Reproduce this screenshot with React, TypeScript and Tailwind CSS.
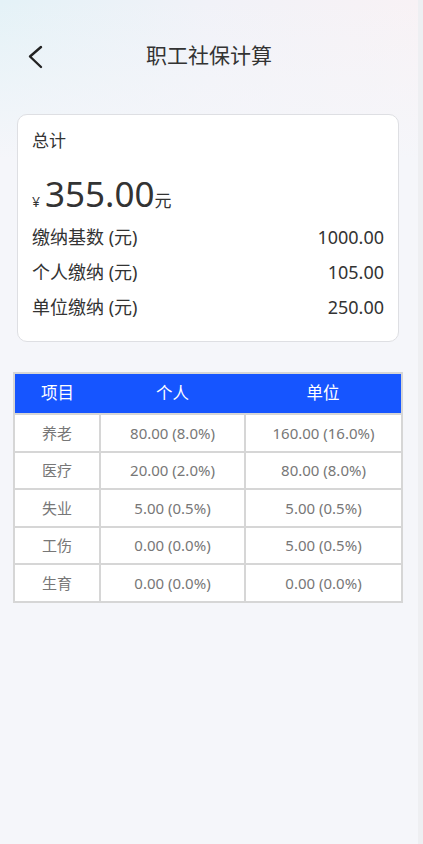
const summary = [
  { label: "缴纳基数 (元)", value: "1000.00" },
  { label: "个人缴纳 (元)", value: "105.00" },
  { label: "单位缴纳 (元)", value: "250.00" },
];

const rows = [
  { name: "养老", personal: "80.00 (8.0%)", company: "160.00 (16.0%)" },
  { name: "医疗", personal: "20.00 (2.0%)", company: "80.00 (8.0%)" },
  { name: "失业", personal: "5.00 (0.5%)", company: "5.00 (0.5%)" },
  { name: "工伤", personal: "0.00 (0.0%)", company: "5.00 (0.5%)" },
  { name: "生育", personal: "0.00 (0.0%)", company: "0.00 (0.0%)" },
];

export default function App() {
  return (
    <div
      className="flex h-[844px] w-[423px] overflow-hidden bg-[#f5f6fa]"
      style={{ fontFamily: '"Noto Sans", "Noto Sans CJK SC", sans-serif' }}
    >
      <div className="flex-1 bg-[linear-gradient(180deg,rgba(245,246,250,0)_0px,#f5f6fa_160px),linear-gradient(90deg,#e4f2f7_0%,#f1f2f8_50%,#f8f2f5_100%)]">
        <header className="relative flex h-[114px] items-center justify-center pb-[2px]">
          <svg
            className="absolute left-[26px] top-[43px] h-[28px] w-[20px]"
            viewBox="0 0 20 28"
            fill="none"
            stroke="#222"
            strokeWidth={2.4}
            strokeLinecap="round"
            strokeLinejoin="round"
          >
            <polyline points="15,4 4,13.5 15,24" />
          </svg>
          <h1 className="text-[21px] text-[#333]">职工社保计算</h1>
        </header>

        <section className="mx-[17px] w-[382px] rounded-[10px] border border-[#dedfe3] bg-white px-[14px] pb-[16px] pt-[12px]">
          <div className="text-[17px] leading-[28px] text-[#333]">总计</div>
          <div className="mt-[19px] flex items-baseline text-[#333]">
            <span className="mr-[5px] text-[14px]">¥</span>
            <span className="text-[35px] leading-[40px]">355.00</span>
            <span className="text-[17px]">元</span>
          </div>
          <div className="mt-[6px] flex flex-col">
            {summary.map((s) => (
              <div key={s.label} className="flex h-[35px] items-center justify-between text-[18px] text-[#333]">
                <span>{s.label}</span>
                <span>{s.value}</span>
              </div>
            ))}
          </div>
        </section>

        <table className="ml-[13px] mt-[30px] w-[390px] border-collapse border-2 border-[#d6d6d6] bg-white text-center">
          <thead>
            <tr className="h-[41px] bg-[#1655ff] text-[16.5px] text-white">
              <th className="w-[86px] font-normal">项目</th>
              <th className="w-[145px] font-normal">个人</th>
              <th className="font-normal">单位</th>
            </tr>
          </thead>
          <tbody>
            {rows.map((r) => (
              <tr key={r.name} className="h-[37.6px] text-[15px] text-[#777]">
                <td className="border-2 border-[#d6d6d6]">{r.name}</td>
                <td className="border-2 border-[#d6d6d6]">{r.personal}</td>
                <td className="border-2 border-[#d6d6d6]">{r.company}</td>
              </tr>
            ))}
          </tbody>
        </table>
      </div>
      <div className="w-[5px] bg-[#eeeff2]" />
    </div>
  );
}
